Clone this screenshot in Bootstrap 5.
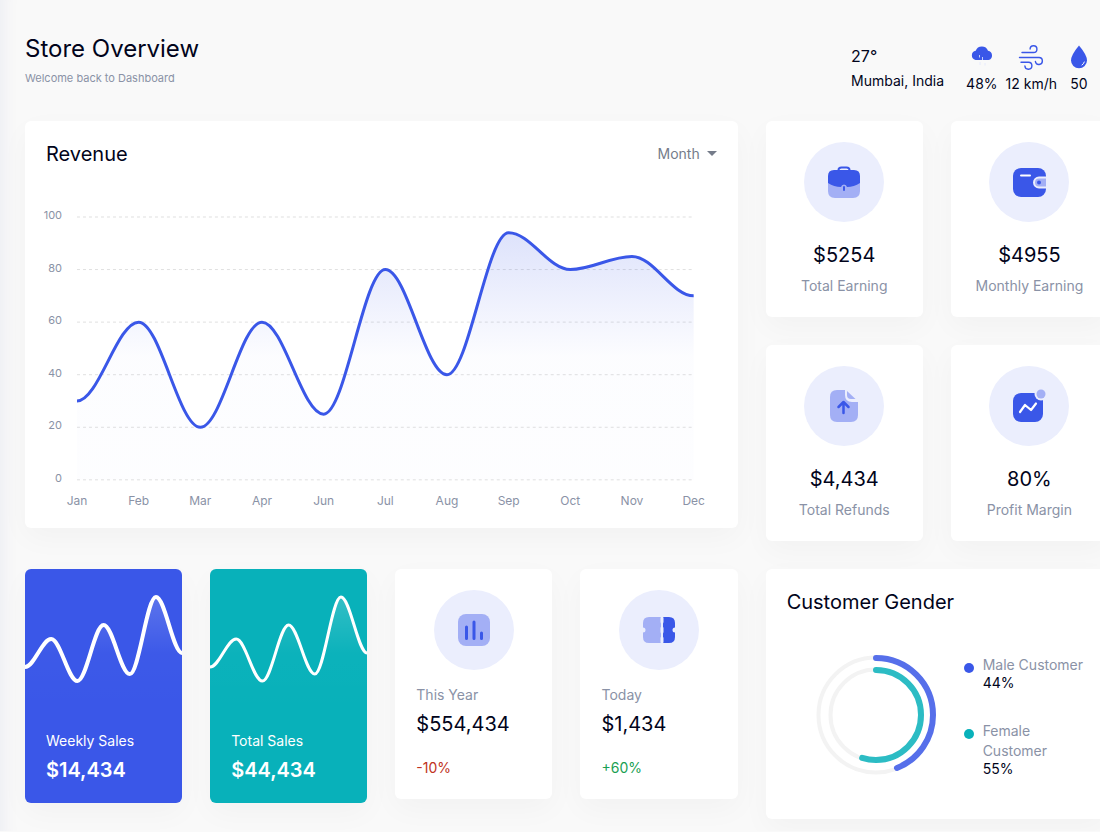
<!DOCTYPE html>
<html lang="en">
<head>
<meta charset="utf-8">
<meta name="viewport" content="width=device-width, initial-scale=1">
<title>Store Overview</title>
<link href="https://cdn.jsdelivr.net/npm/bootstrap@5.3.0/dist/css/bootstrap.min.css" rel="stylesheet">
<style>
:root { --ink: #01041b; --muted: #8a92a6; --blue: #3a57e8; --teal: #08b1ba; --tint: #a3aff5; --pale: #ebeefd; }
body { font-family: Inter, "Liberation Sans", sans-serif; font-size: 14px; line-height: 20px; color: var(--ink); background: #f9f9f9; overflow-x: hidden; }
.dash { padding: 34px 0 12px 25px; margin-right: -8px; box-shadow: inset 20px 0 20px -20px rgba(17, 38, 146, .08); }
.dash .row { --bs-gutter-x: 28px; --bs-gutter-y: 28px; }
h1 { font-size: 24px; line-height: 30px; font-weight: 400; margin: 0; }
.welcome { font-size: 11px; line-height: 16px; color: var(--muted); margin: 6px 0 0; }
.topbar { margin-bottom: 23px; padding-right: 15px; }
.climate { gap: 22px; }
.local { padding-top: 10px; }
.temp { font-size: 16px; line-height: 24px; }
.place { line-height: 26px; }
.weather { gap: 8px; padding-top: 8px; }
.weather svg { height: 28px; display: block; margin: 0 auto; }
.weather span { display: block; line-height: 28px; text-align: center; }
.panel { background: #fff; border: 0; border-radius: 6px; box-shadow: 0 10px 30px rgba(17, 17, 17, .03); padding: 21px; }
h2 { font-size: 20px; line-height: 24px; font-weight: 400; margin: 0; }
.amount { font-size: 20px; line-height: 26px; }
.soft { color: var(--muted); }
.disc { width: 80px; height: 80px; border-radius: 50%; background: var(--pale); }
.disc svg { width: 40px; height: 40px; display: block; }
.stat { min-height: 196px; }
.stat .amount { margin-top: 20px; }
.stat .soft { margin: 8px 0 0; white-space: nowrap; }
.range { color: #757c8a; font-size: 14px; line-height: 20px; padding: 0; border: 0; }
.range::after { margin-left: 7px; vertical-align: 3px; border-width: 5px 5px 0; }
.chart { display: block; width: 100%; overflow: visible; margin-top: 33px; }
.chart text { font-size: 12px; fill: var(--muted); }
.chart .ylab { font-size: 11px; }
.sales { padding: 0; color: #fff; overflow: hidden; min-height: 234px; }
.sales-blue { background: var(--blue); }
.sales-teal { background: var(--teal); }
.sales svg { display: block; width: 100%; }
.sales-text { padding: 6px 21px 20px; }
.sales .amount { font-weight: 600; margin-top: 6px; }
.period { min-height: 230px; }
.period p { margin: 15px 0 0; }
.period .amount { margin-top: 6px; }
.period .change { margin-top: 21px; }
.change-down { color: #c03221; }
.change-up { color: #1aa053; }
.gender { min-height: 250px; }
.split { margin-top: 41px; }
.rings { width: 120px; height: 120px; flex: none; margin-left: 29px; }
.keys { margin-left: 28px; }
.key { gap: 9px; }
.key + .key { margin-top: 30px; }
.key .soft { line-height: 20px; }
.key .value { line-height: 16px; }
.dot { width: 10px; height: 10px; border-radius: 50%; flex: none; margin-top: 8px; }
.dot-blue { background: var(--blue); }
.dot-teal { background: var(--teal); }
</style>
</head>
<body>
<main class="dash">
  <header class="topbar d-flex justify-content-between align-items-start">
    <div>
      <h1>Store Overview</h1>
      <p class="welcome">Welcome back to Dashboard</p>
    </div>
    <div class="climate d-flex">
      <div class="local">
        <div class="temp">27°</div>
        <div class="place">Mumbai, India</div>
      </div>
      <div class="weather d-flex">
        <div>
          <svg width="28" viewBox="0 0 28 28"><path d="M7.500 18a4.700 4.700 0 0 1 .2-9.200A6.500 6.500 0 0 1 20 8.800 4.700 4.700 0 0 1 20.500 18z" fill="#3a57e8"/><path d="M11.500 13v2.500M14.500 15v3" stroke="#c3cdf9" fill="none"/><path d="M12 20v3M17 21v2.500" stroke="#e6eafc" fill="none"/></svg>
          <span>48%</span>
        </div>
        <div>
          <svg width="28" viewBox="0 0 28 28" fill="none" stroke="#3a57e8" stroke-width="1.400" stroke-linecap="round"><path d="M5 10.500h11.500a3.400 3.400 0 1 0-3.400-3.500M2.500 15.500h19.500a3.500 3.500 0 1 1-3.600 4M4 20.200h7.500a3.500 3.500 0 1 1-3.600 3.800"/></svg>
          <span>12 km/h</span>
        </div>
        <div class="px-1">
          <svg width="20" viewBox="0 0 20 28"><path d="M10 3.500Q18 13 18 18.500a8 7.800 0 0 1-16 0Q2 13 10 3.500z" fill="#3a57e8"/><path d="M15.300 20a5 5 0 0 1-2.300 3" fill="none" stroke="#fff" stroke-linecap="round"/></svg>
          <span>50</span>
        </div>
      </div>
    </div>
  </header>

  <div class="row">
    <section class="col-8">
      <div class="card panel">
        <div class="d-flex justify-content-between align-items-center">
          <h2>Revenue</h2>
          <div class="dropdown d-flex">
            <button type="button" class="btn range dropdown-toggle" data-bs-toggle="dropdown" aria-expanded="false">Month</button>
            <ul class="dropdown-menu dropdown-menu-end">
              <li><a class="dropdown-item" href="#">Week</a></li>
              <li><a class="dropdown-item" href="#">Month</a></li>
              <li><a class="dropdown-item" href="#">Year</a></li>
            </ul>
          </div>
        </div>
        <svg class="chart" id="revenue" viewBox="0 0 671 308" role="img" aria-label="Revenue by month"></svg>
      </div>
    </section>
    <section class="col-4">
      <div class="row">
        <div class="col-6"><div class="card panel stat align-items-center">
          <div class="disc d-flex align-items-center justify-content-center"><svg viewBox="0 0 40 40"><path d="M4 19h32v10q0 7-7 7H11q-7 0-7-7z" fill="#a3aff5"/><path d="M14.500 8.500V8q0-2.500 3-2.500h5q3 0 3 2.500v.5" fill="none" stroke="#3a57e8" stroke-width="2"/><path d="M10 8h20q6 0 6 6v7q-6 4-13 4-.6-2.600-3-2.600T17 25q-7 0-13-4v-7q0-6 6-6z" fill="#3a57e8"/><path d="M20 25v3" stroke="#3a57e8" stroke-width="2" stroke-linecap="round"/></svg></div>
          <div class="amount">$5254</div><p class="soft">Total Earning</p>
        </div></div>
        <div class="col-6"><div class="card panel stat align-items-center">
          <div class="disc d-flex align-items-center justify-content-center"><svg viewBox="0 0 40 40"><rect x="4" y="6" width="33" height="29" rx="8" fill="#3a57e8"/><path d="M38 15.500h-8a5 5 0 0 0 0 10h8z" fill="#a3aff5"/><path d="M37 15.500h-7a5 5 0 0 0 0 10h7" fill="none" stroke="#ebeefd" stroke-width="2"/><path d="M37 14h2v13h-2z" fill="#ebeefd"/><circle cx="30" cy="20.500" r="2" fill="#3a57e8"/><path d="M12 13.500h9" stroke="#fff" stroke-width="2" stroke-linecap="round"/></svg></div>
          <div class="amount">$4955</div><p class="soft">Monthly Earning</p>
        </div></div>
        <div class="col-6"><div class="card panel stat align-items-center">
          <div class="disc d-flex align-items-center justify-content-center"><svg viewBox="0 0 40 40"><path d="M13 4h8v5q0 7 7 7h6v13q0 7-7 7H13q-7 0-7-7V11q0-7 7-7z" fill="#a3aff5"/><path d="M23 5l8.500 8H27q-4 0-4-4z" fill="#a3aff5"/><path d="M19.500 27V16m-5 5l5-5 5 5" fill="none" stroke="#3a57e8" stroke-width="2.500" stroke-linecap="round" stroke-linejoin="round"/></svg></div>
          <div class="amount">$4,434</div><p class="soft">Total Refunds</p>
        </div></div>
        <div class="col-6"><div class="card panel stat align-items-center">
          <div class="disc d-flex align-items-center justify-content-center"><svg viewBox="0 0 40 40"><rect x="4" y="7" width="30" height="29" rx="8" fill="#3a57e8"/><circle cx="32" cy="8" r="6.500" fill="#ebeefd"/><circle cx="32" cy="8" r="4.500" fill="#a3aff5"/><path d="M11 26l5-7 6 5 5-6.500" fill="none" stroke="#fff" stroke-width="2.200" stroke-linecap="round" stroke-linejoin="round"/></svg></div>
          <div class="amount">80%</div><p class="soft">Profit Margin</p>
        </div></div>
      </div>
    </section>

    <section class="col-2">
      <div class="card panel sales sales-blue">
        <svg class="mini" data-stroke="4" viewBox="0 0 157 156" role="img" aria-label="Weekly sales trend"></svg>
        <div class="sales-text"><div>Weekly Sales</div><div class="amount">$14,434</div></div>
      </div>
    </section>
    <section class="col-2">
      <div class="card panel sales sales-teal">
        <svg class="mini" data-stroke="3" viewBox="0 0 157 156" role="img" aria-label="Total sales trend"></svg>
        <div class="sales-text"><div>Total Sales</div><div class="amount">$44,434</div></div>
      </div>
    </section>
    <section class="col-2">
      <div class="card panel period">
        <div class="disc mx-auto d-flex align-items-center justify-content-center"><svg viewBox="0 0 40 40"><rect x="4" y="4" width="32" height="32" rx="8" fill="#a3aff5"/><path d="M12.500 17v11.500M20 12v16.500M27.500 23v5.500" stroke="#3a57e8" stroke-width="3" stroke-linecap="round"/></svg></div>
        <p class="soft">This Year</p><div class="amount">$554,434</div><div class="change change-down">-10%</div>
      </div>
    </section>
    <section class="col-2">
      <div class="card panel period">
        <div class="disc mx-auto d-flex align-items-center justify-content-center"><svg viewBox="0 0 40 40"><path d="M10 7h12v26H10q-6 0-6-6v-4.500a2.500 2.500 0 0 0 0-5V13q0-6 6-6z" fill="#a3aff5"/><path d="M24 7h6q6 0 6 6v4.500a2.500 2.500 0 0 0 0 5V27q0 6-6 6h-6z" fill="#3a57e8"/><path d="M23 8v4M23 18v4M23 28v4" stroke="#ebeefd" stroke-width="3" stroke-linecap="round"/></svg></div>
        <p class="soft">Today</p><div class="amount">$1,434</div><div class="change change-up">+60%</div>
      </div>
    </section>
    <section class="col-4">
      <div class="card panel gender">
        <h2>Customer Gender</h2>
        <div class="split d-flex">
          <svg class="rings" viewBox="0 0 120 120" role="img" aria-label="Male 44%, female 55%"><g fill="none" stroke="#f3f3f3" stroke-width="4"><circle cx="60" cy="60" r="57.500"/><circle cx="60" cy="60" r="45.500"/></g><g fill="none" stroke-width="6" stroke-linecap="round" transform="rotate(-90 60 60)"><circle cx="60" cy="60" r="57" pathLength="100" stroke-dasharray="44 100" stroke="#566fea"/><circle cx="60" cy="60" r="45" pathLength="100" stroke-dasharray="55 100" stroke="#2cbcc4"/></g></svg>
          <div class="keys">
            <div class="key d-flex"><span class="dot dot-blue"></span><div><div class="soft">Male Customer</div><div class="value">44%</div></div></div>
            <div class="key d-flex"><span class="dot dot-teal"></span><div><div class="soft">Female Customer</div><div class="value">55%</div></div></div>
          </div>
        </div>
      </div>
    </section>
  </div>
</main>
<script src="https://cdn.jsdelivr.net/npm/bootstrap@5.3.0/dist/js/bootstrap.bundle.min.js"></script>
<script>
// Smooth line through the points, flat at every one of them
function curve(points) {
  return points.map(([x, y], i) => {
    if (!i) return `M${x} ${y}`;
    const [px, py] = points[i - 1], reach = (x - px) * 0.35;
    return `C${px + reach} ${py} ${x - reach} ${y} ${x} ${y}`;
  }).join('');
}
const months = ['Jan', 'Feb', 'Mar', 'Apr', 'Jun', 'Jul', 'Aug', 'Sep', 'Oct', 'Nov', 'Dec'];
const values = [30, 60, 20, 60, 25, 80, 40, 94, 80, 85, 70];
const left = 31, right = 648, top0 = 18, base = 281;
const px = i => left + i * (right - left) / (months.length - 1);
const py = v => base - v * (base - top0) / 100;
const line = curve(values.map((v, i) => [px(i), py(v)]));
let out = '<defs><linearGradient id="fade" x2="0" y2="1"><stop stop-color="#3a57e8" stop-opacity=".17"/><stop offset=".5" stop-color="#3a57e8" stop-opacity=".015"/><stop offset="1" stop-color="#3a57e8" stop-opacity=".01"/></linearGradient></defs>';
for (let v = 0; v <= 100; v += 20) {
  out += `<path d="M${left} ${py(v)}H${right}" stroke="#e0e0e0" stroke-dasharray="3 3"/><text class="ylab" x="16" y="${py(v) + 2}" text-anchor="end">${v}</text>`;
}
out += `<path d="${line}V${base}H${left}z" fill="url(#fade)"/><path d="${line}" fill="none" stroke="#3a57e8" stroke-width="3"/>`;
months.forEach((m, i) => { out += `<text x="${px(i)}" y="306" text-anchor="middle">${m}</text>`; });
document.getElementById('revenue').innerHTML = out;

const trend = [98, 70, 112, 56, 105, 28, 84];
document.querySelectorAll('.mini').forEach((svg, n) => {
  const d = curve(trend.map((y, i) => [i * 157 / 6, y]));
  svg.innerHTML = `<defs><linearGradient id="glow${n}" x2="0" y2="1"><stop stop-color="#fff" stop-opacity=".17"/><stop offset=".5" stop-color="#fff" stop-opacity=".015"/><stop offset="1" stop-color="#fff" stop-opacity="0"/></linearGradient></defs><path d="${d}V140H0z" fill="url(#glow${n})"/><path d="${d}" fill="none" stroke="#fff" stroke-width="${svg.dataset.stroke}"/>`;
});
</script>
</body>
</html>
